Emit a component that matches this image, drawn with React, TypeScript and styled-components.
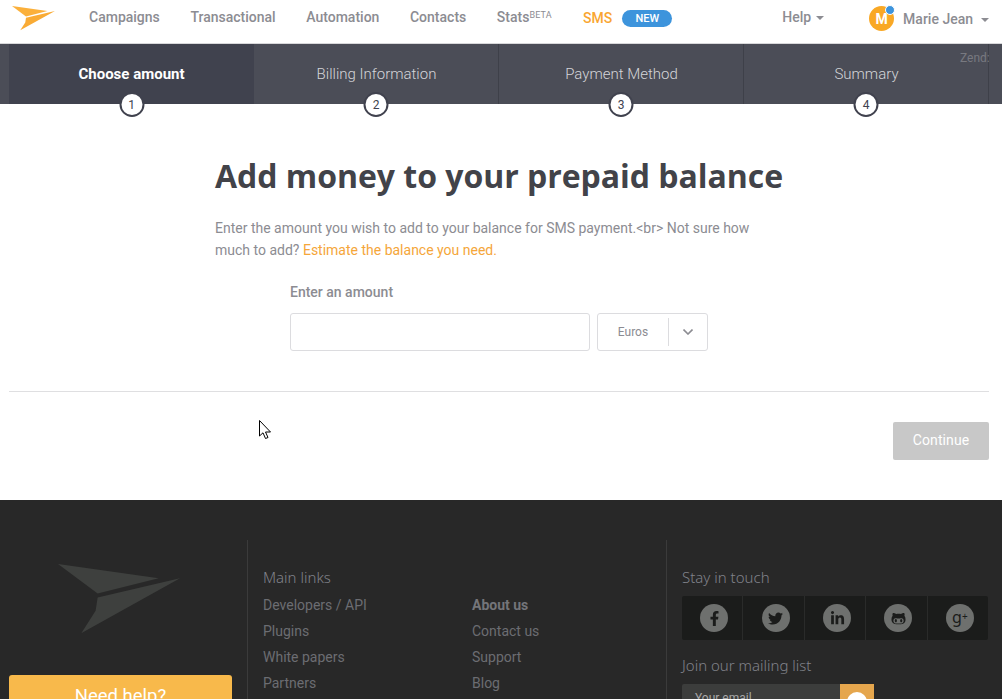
import styled, { createGlobalStyle } from 'styled-components';
import { FaFacebookF, FaTwitter, FaLinkedinIn, FaGithubAlt } from 'react-icons/fa';

const GlobalStyle = createGlobalStyle`
	html, body {
		margin: 0;
		padding: 0;
		height: 699px;
		overflow: hidden;
		background: #fff;
		font-family: 'Roboto', 'Liberation Sans', sans-serif;
	}
`;

const Page = styled.div`
	position: relative;
	width: 1002px;
	height: 699px;
	overflow: hidden;
`;

const Header = styled.header`
	display: flex;
	align-items: center;
	height: 43px;
	border-bottom: 1px solid #d8d8da;
	padding: 0 13px 0 12px;
	box-sizing: content-box;
`;

const LogoSlot = styled.div`
	flex: none;
	margin-bottom: 6px;
`;

const LogoMark = styled.svg<{ $w: number }>`
	display: block;
	flex: none;
	width: ${(p) => p.$w}px;
	height: ${(p) => (p.$w * 68) / 120}px;
`;

const Nav = styled.nav`
	display: flex;
	align-items: center;
	gap: 30.6px;
	margin: 0 0 10px 34px;
`;

const NavItem = styled.a<{ $orange?: boolean }>`
	font-size: 14px;
	font-weight: 500;
	color: ${(p) => (p.$orange ? '#f9a632' : '#8c8c92')};
	text-decoration: none;
	white-space: nowrap;
	margin-top: ${(p) => (p.$orange ? 2 : 0)}px;
	margin-left: ${(p) => (p.$orange ? 0.5 : 0)}px;

	sup {
		font-size: 9px;
		font-weight: 400;
		letter-spacing: 0.2px;
		vertical-align: 4px;
		line-height: 0;
	}
`;

const NewBadge = styled.span`
	display: inline-flex;
	align-items: center;
	justify-content: center;
	width: 50px;
	height: 17px;
	margin: 3px 0 0 -20.5px;
	border-radius: 9px;
	background: #3d94dc;
	color: #fff;
	font-size: 11px;
	font-weight: 500;
`;

const RightNav = styled.div`
	display: flex;
	align-items: center;
	margin: 0 0 6px auto;
`;

const HelpSlot = styled.div`
	margin-bottom: 5px;
`;

const Caret = styled.span<{ $gap: number }>`
	display: inline-block;
	margin-left: ${(p) => p.$gap}px;
	vertical-align: 2px;
	border-left: 4px solid transparent;
	border-right: 4px solid transparent;
	border-top: 4px solid #8c8c92;
`;

const Avatar = styled.div`
	position: relative;
	width: 25px;
	height: 25px;
	margin-left: 45px;
	border-radius: 50%;
	background: #f9a825;
	color: #fff;
	font-size: 14px;
	font-weight: 700;
	display: flex;
	align-items: center;
	justify-content: center;
`;

const AvatarDot = styled.span`
	position: absolute;
	top: -1px;
	right: -1px;
	width: 8px;
	height: 8px;
	border-radius: 50%;
	background: #3d94dc;
	border: 1px solid #fff;
`;

const UserName = styled.span`
	font-size: 14px;
	font-weight: 500;
	color: #8c8c92;
	margin-left: 9px;
`;

const Steps = styled.div`
	position: relative;
	display: flex;
	height: 60px;
	background: #4b4d57;
	padding-left: 9px;
`;

const Step = styled.div<{ $active?: boolean }>`
	position: relative;
	box-sizing: border-box;
	width: 245px;
	display: flex;
	justify-content: center;
	padding: 20px 0 0 ${(p) => (p.$active ? 0 : 1)}px;
	font-size: 15px;
	line-height: 20px;
	font-weight: ${(p) => (p.$active ? 700 : 300)};
	color: ${(p) => (p.$active ? '#fff' : '#d4d5d9')};
	background: ${(p) => (p.$active ? '#40424e' : 'transparent')};
	border-right: ${(p) => (p.$active ? 'none' : '1px solid #3e4049')};
`;

const StepNumber = styled.span`
	position: absolute;
	left: 50%;
	bottom: -13px;
	transform: translateX(-50%);
	box-sizing: border-box;
	width: 25px;
	height: 25px;
	border-radius: 50%;
	background: #fff;
	border: 2px solid #40424e;
	color: #40424e;
	font-size: 12px;
	font-weight: 400;
	display: flex;
	align-items: center;
	justify-content: center;
`;

const ZendNote = styled.span`
	position: absolute;
	top: 7px;
	left: 960px;
	width: 29px;
	overflow: hidden;
	font-size: 12px;
	line-height: 15px;
	color: #787980;
`;

const Main = styled.main`
	height: 396px;
	box-sizing: border-box;
	padding: 52px 13px 0 9px;
`;

const Intro = styled.div`
	width: 568px;
	margin-left: 206px;
`;

const Title = styled.h1`
	margin: 0;
	font-family: 'Open Sans', 'Noto Sans', sans-serif;
	font-size: 32px;
	line-height: 40px;
	font-weight: 700;
	letter-spacing: -0.03px;
	color: #424349;
	white-space: nowrap;
`;

const Lead = styled.p`
	margin: 21px 0 0;
	width: 545px;
	font-size: 14px;
	line-height: 22px;
	color: #8c8c92;

	a {
		color: #f5a63a;
		text-decoration: none;
	}
`;

const AmountForm = styled.div`
	margin: 21px 0 0 281px;
`;

const FieldLabel = styled.label`
	display: block;
	font-size: 14px;
	line-height: 20px;
	font-weight: 500;
	color: #8c8c92;
`;

const FieldRow = styled.div`
	display: flex;
	gap: 7px;
	margin-top: 11px;
`;

const AmountInput = styled.input`
	box-sizing: border-box;
	width: 300px;
	height: 38px;
	border: 1px solid #dcdcdf;
	border-radius: 3px;
	background: #fff;
	outline: none;
`;

const CurrencySelect = styled.div`
	box-sizing: border-box;
	width: 111px;
	height: 38px;
	border: 1px solid #dcdcdf;
	border-radius: 3px;
	display: flex;
	align-items: center;
`;

const CurrencyLabel = styled.span`
	box-sizing: border-box;
	width: 71px;
	height: 28px;
	line-height: 28px;
	text-align: center;
	font-size: 12px;
	color: #8c8c92;
	border-right: 1px solid #dcdcdf;
`;

const CurrencyChevron = styled.svg`
	width: 10px;
	height: 6px;
	margin-left: 14px;
	fill: none;
	stroke: #8c8c92;
	stroke-width: 1.6;
`;

const Rule = styled.hr`
	margin: 40px 0 0;
	border: none;
	border-top: 1px solid #dfdfe1;
`;

const Actions = styled.div`
	display: flex;
	justify-content: flex-end;
	margin-top: 30px;
`;

const ContinueButton = styled.button`
	width: 96px;
	height: 38px;
	padding: 0 0 2px;
	border: none;
	border-radius: 2px;
	background: #c8c8c8;
	color: #fff;
	font-family: inherit;
	font-size: 14px;
	font-weight: 400;
	letter-spacing: 0.1px;
`;

const Footer = styled.footer`
	height: 199px;
	box-sizing: border-box;
	background: #282828;
	padding: 40px 13px 0 9px;
	display: flex;
	overflow: hidden;
`;

const FooterBrand = styled.div`
	width: 223px;
	flex: none;
`;

const BrandLogo = styled.div`
	padding: 24px 0 0 49px;
`;

const HelpButton = styled.div`
	margin-top: 42px;
	height: 60px;
	box-sizing: border-box;
	border-radius: 3px;
	background: #f8b94b;
	color: #fff;
	font-size: 18.5px;
	line-height: 20px;
	padding-top: 11px;
	text-align: center;
`;

const FooterLinks = styled.div`
	width: 420px;
	box-sizing: border-box;
	margin-left: 15px;
	height: 200px;
	border-left: 1px solid #3b3b3b;
	border-right: 1px solid #3b3b3b;
	padding: 27px 0 0 15px;
	display: grid;
	grid-template-columns: 209px 1fr;
	grid-template-rows: 25px repeat(4, 26px);
`;

const FooterHeading = styled.div`
	font-family: 'Noto Sans', 'Open Sans', sans-serif;
	font-weight: 300;
	font-size: 15px;
	line-height: 20px;
	color: #80828a;
`;

const LinksHeading = styled(FooterHeading)`
	grid-column: 1 / -1;
`;

const FooterLink = styled.a<{ $bold?: boolean }>`
	font-size: 14px;
	line-height: 26px;
	font-weight: ${(p) => (p.$bold ? 700 : 400)};
	color: ${(p) => (p.$bold ? '#74757a' : '#6c6d72')};
	text-decoration: none;
`;

const FooterContact = styled.div`
	margin-left: 15px;
	padding-top: 27px;
	width: 306px;
	flex: none;
`;

const SocialBar = styled.div`
	display: flex;
	height: 44px;
	margin-top: 9px;
	background: #1b1c1b;
	border-radius: 2px;
`;

const SocialCell = styled.div`
	flex: 1;
	box-sizing: border-box;
	padding-left: 4px;
	display: flex;
	align-items: center;
	justify-content: center;
	border-right: 1px solid #2a2b2a;

	&:last-child {
		border-right: none;
	}
`;

const SocialIcon = styled.span`
	width: 28px;
	height: 28px;
	border-radius: 50%;
	background: #6e706e;
	color: #1b1c1b;
	font-size: 15px;
	display: flex;
	align-items: center;
	justify-content: center;
`;

const GooglePlusMark = styled.span`
	font-family: 'Noto Sans', 'Open Sans', sans-serif;
	font-weight: 400;
	font-size: 16px;
	line-height: 16px;
	margin-top: -3px;

	small {
		font-size: 10px;
		vertical-align: 3px;
	}
`;

const MailingHeading = styled(FooterHeading)`
	margin-top: 15px;
`;

const MailingForm = styled.div`
	display: flex;
	width: 192px;
	height: 36px;
	margin-top: 9px;
`;

const EmailField = styled.div`
	flex: 1;
	background: #3c3d3c;
	border-radius: 2px 0 0 2px;
	padding: 7px 0 0 13px;
	font-size: 12px;
	line-height: 14px;
	color: #a8a8a8;
`;

const MailingSubmit = styled.div`
	width: 34px;
	background: #e5a64d;
	display: flex;
	justify-content: center;
	padding-top: 8px;
	box-sizing: border-box;
`;

const SubmitDisc = styled.span`
	width: 20px;
	height: 20px;
	border-radius: 50%;
	background: #fff;
	color: #e5a64d;
	font-size: 12px;
	line-height: 20px;
	text-align: center;
`;

const Pointer = styled.svg`
	position: absolute;
	left: 259px;
	top: 420px;
	width: 13px;
	height: 20px;
`;

const Logo = ({ width, upper, lower }: { width: number; upper: string; lower: string }) => (
	<LogoMark $w={width} viewBox="0 0 120 68">
		<polygon points="0,0 99,14 39,29" fill={upper} />
		<polygon points="120,14 39,33 37,46 23,68" fill={lower} />
	</LogoMark>
);

const steps = ['Choose amount', 'Billing Information', 'Payment Method', 'Summary'];

const socials = [FaFacebookF, FaTwitter, FaLinkedinIn, FaGithubAlt];

const App = () => {
	return (
		<Page>
			<GlobalStyle />
			<Header>
				<LogoSlot>
					<Logo width={43} upper="#fbb03b" lower="#f9ab35" />
				</LogoSlot>
				<Nav>
					<NavItem>Campaigns</NavItem>
					<NavItem>Transactional</NavItem>
					<NavItem>Automation</NavItem>
					<NavItem>Contacts</NavItem>
					<NavItem>
						Stats<sup>BETA</sup>
					</NavItem>
					<NavItem $orange>SMS</NavItem>
					<NewBadge>NEW</NewBadge>
				</Nav>
				<RightNav>
					<HelpSlot>
						<NavItem>
							Help
							<Caret $gap={5} />
						</NavItem>
					</HelpSlot>
					<Avatar>
						M
						<AvatarDot />
					</Avatar>
					<UserName>
						Marie Jean
						<Caret $gap={8} />
					</UserName>
				</RightNav>
			</Header>
			<Steps>
				{steps.map((label, i) => (
					<Step key={label} $active={i === 0}>
						{label}
						<StepNumber>{i + 1}</StepNumber>
					</Step>
				))}
				<ZendNote>Zend:</ZendNote>
			</Steps>
			<Main>
				<Intro>
					<Title>Add money to your prepaid balance</Title>
					<Lead>
						Enter the amount you wish to add to your balance for SMS payment.&lt;br&gt; Not sure how much to add?{' '}
						<a>Estimate the balance you need.</a>
					</Lead>
				</Intro>
				<AmountForm>
					<FieldLabel>Enter an amount</FieldLabel>
					<FieldRow>
						<AmountInput />
						<CurrencySelect>
							<CurrencyLabel>Euros</CurrencyLabel>
							<CurrencyChevron viewBox="0 0 10 6">
								<path d="M0.5 0.5 L5 5 L9.5 0.5" />
							</CurrencyChevron>
						</CurrencySelect>
					</FieldRow>
				</AmountForm>
				<Rule />
				<Actions>
					<ContinueButton>Continue</ContinueButton>
				</Actions>
			</Main>
			<Footer>
				<FooterBrand>
					<BrandLogo>
						<Logo width={122} upper="#3e403e" lower="#3e403e" />
					</BrandLogo>
					<HelpButton>Need help?</HelpButton>
				</FooterBrand>
				<FooterLinks>
					<LinksHeading>Main links</LinksHeading>
					<FooterLink>Developers / API</FooterLink>
					<FooterLink $bold>About us</FooterLink>
					<FooterLink>Plugins</FooterLink>
					<FooterLink>Contact us</FooterLink>
					<FooterLink>White papers</FooterLink>
					<FooterLink>Support</FooterLink>
					<FooterLink>Partners</FooterLink>
					<FooterLink>Blog</FooterLink>
				</FooterLinks>
				<FooterContact>
					<FooterHeading>Stay in touch</FooterHeading>
					<SocialBar>
						{socials.map((Icon, i) => (
							<SocialCell key={i}>
								<SocialIcon>
									<Icon />
								</SocialIcon>
							</SocialCell>
						))}
						<SocialCell>
							<SocialIcon>
								<GooglePlusMark>
									g<small>+</small>
								</GooglePlusMark>
							</SocialIcon>
						</SocialCell>
					</SocialBar>
					<MailingHeading>Join our mailing list</MailingHeading>
					<MailingForm>
						<EmailField>Your email</EmailField>
						<MailingSubmit>
							<SubmitDisc>➜</SubmitDisc>
						</MailingSubmit>
					</MailingForm>
				</FooterContact>
			</Footer>
			<Pointer viewBox="0 0 13 20">
				<path d="M0.5 0.5 L0.5 16 L4 12.8 L6.5 18.5 L9 17.5 L6.5 12 L11.5 12 Z" fill="#fff" stroke="#000" strokeWidth="1" />
			</Pointer>
		</Page>
	);
};

export default App;
